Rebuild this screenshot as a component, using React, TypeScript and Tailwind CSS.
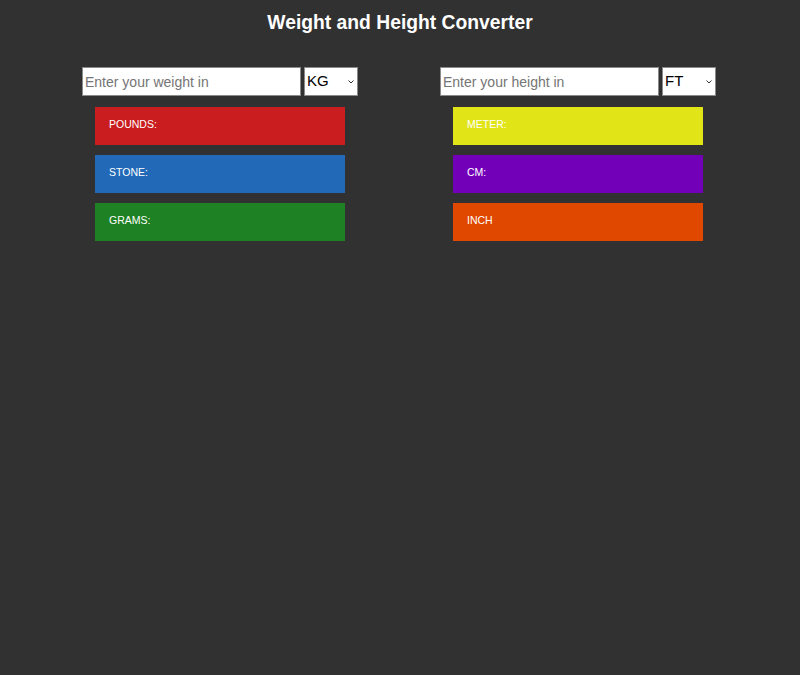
import React, { useState } from "react";

const weightRows = [
  { label: "POUNDS:", color: "bg-[#c91d1f]" },
  { label: "STONE:", color: "bg-[#226ab8]" },
  { label: "GRAMS:", color: "bg-[#1e8123]" }
];

const heightRows = [
  { label: "METER:", color: "bg-[#e1e416]" },
  { label: "CM:", color: "bg-[#7300b9]" },
  { label: "INCH", color: "bg-[#e04800]" }
];

function ConverterColumn({
  placeholder,
  units,
  rows
}: {
  placeholder: string;
  units: string[];
  rows: { label: string; color: string }[];
}) {
  const [value, setValue] = useState("");
  const [unit, setUnit] = useState(units[0]);

  return (
    <div className="flex w-[276px] flex-col items-center">
      <div className="flex w-full gap-[3px]">
        <input
          className="h-[29px] w-[219px] border border-[#8a8a8a] bg-white px-[2px] text-[14px] text-black placeholder:text-[#757575] outline-none"
          placeholder={placeholder}
          value={value}
          onChange={(event) => setValue(event.target.value)}
        />
        <div className="relative h-[29px] w-[54px]">
          <select
            className="h-full w-full appearance-none border border-[#8a8a8a] bg-white pl-[2px] text-[15px] text-black outline-none"
            value={unit}
            onChange={(event) => setUnit(event.target.value)}
          >
            {units.map((item) => (
              <option key={item}>{item}</option>
            ))}
          </select>
          <svg
            className="pointer-events-none absolute right-[4px] top-[13px]"
            width="6"
            height="4"
            viewBox="0 0 6 4"
          >
            <path d="M0.5 0.5 L3 3 L5.5 0.5" fill="none" stroke="#333" strokeWidth="1" />
          </svg>
        </div>
      </div>
      <div className="mt-[11px] flex flex-col gap-[10px]">
        {rows.map((row) => (
          <div
            key={row.label}
            className={`h-[38px] w-[250px] px-[14px] pt-[11px] text-[10.5px] leading-[12px] text-white ${row.color}`}
          >
            {row.label}
          </div>
        ))}
      </div>
    </div>
  );
}

export default function App() {
  return (
    <div className="min-h-[675px] bg-[#323132] font-['Liberation_Sans',Arial,sans-serif]">
      <h1 className="pt-[11px] text-center text-[19.3px] font-bold leading-[24px] text-white">
        Weight and Height Converter
      </h1>
      <div className="mt-[32px] flex gap-[82px] pl-[82px]">
        <ConverterColumn placeholder="Enter your weight in" units={["KG", "LB"]} rows={weightRows} />
        <ConverterColumn placeholder="Enter your height in" units={["FT", "M"]} rows={heightRows} />
      </div>
    </div>
  );
}
